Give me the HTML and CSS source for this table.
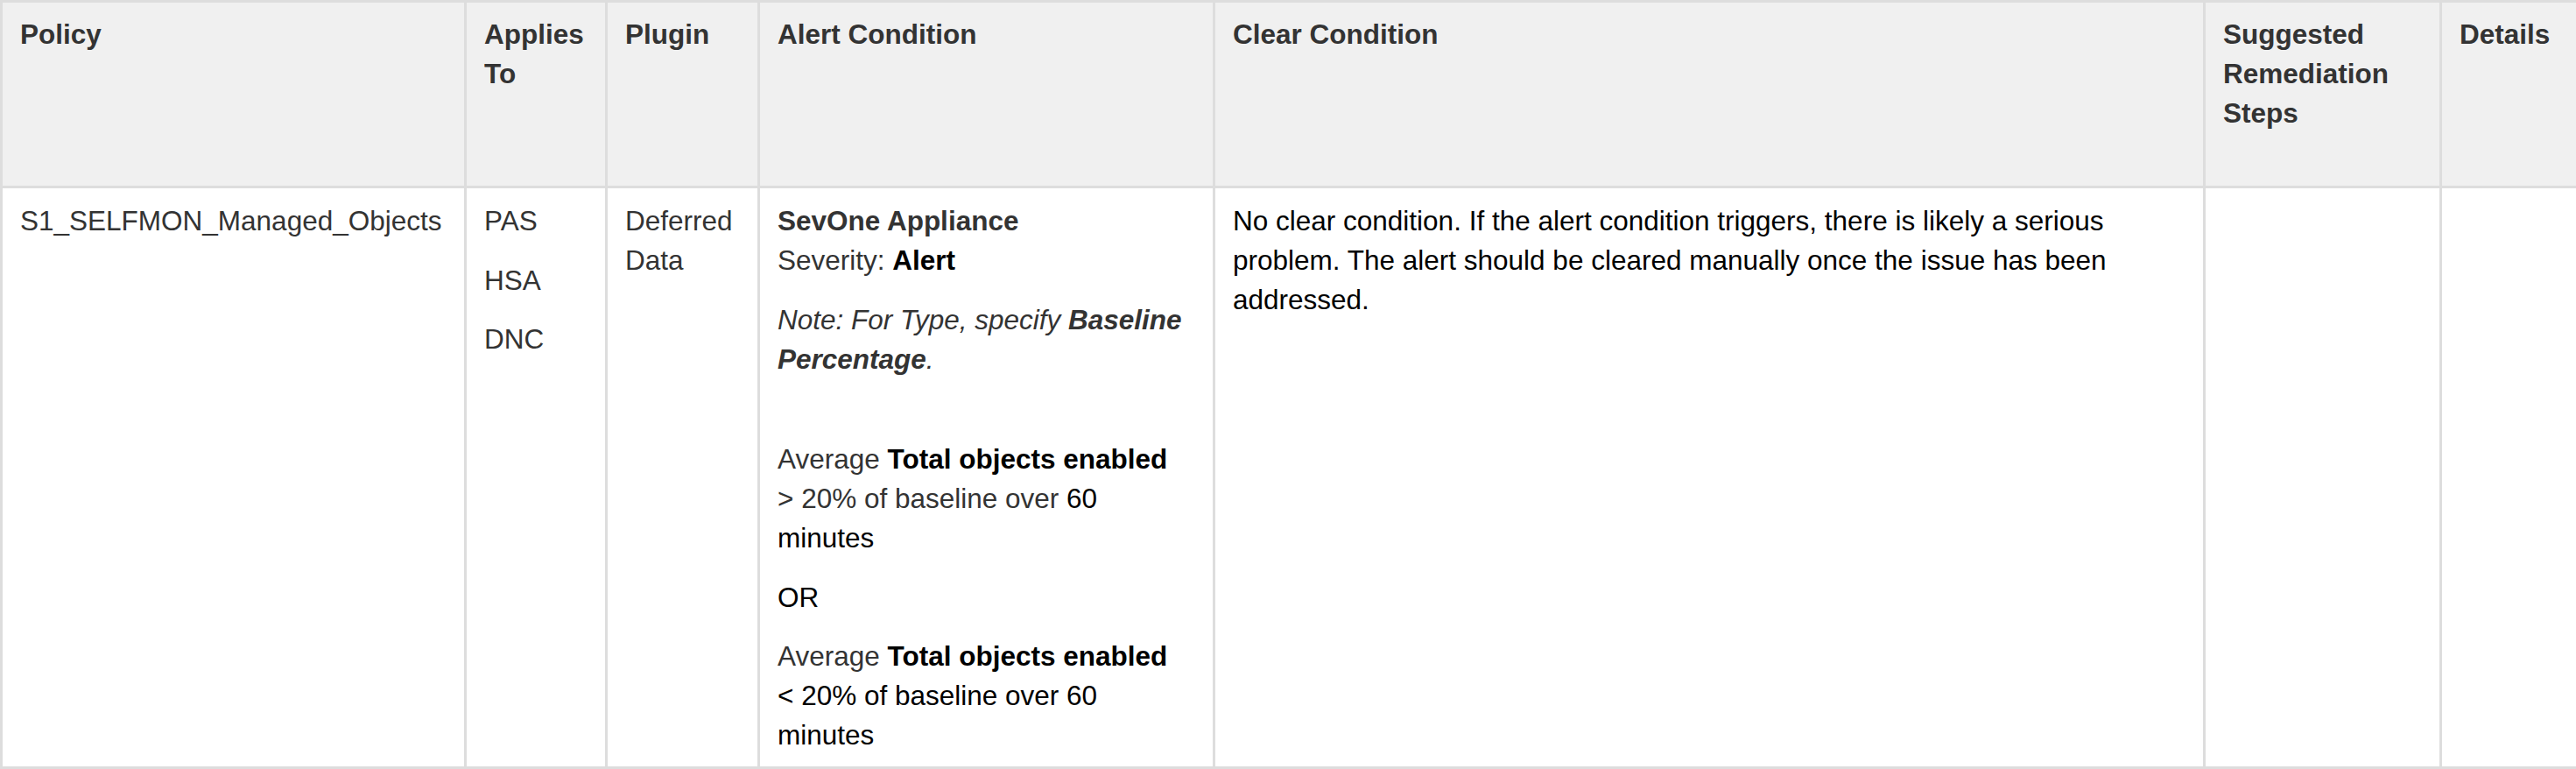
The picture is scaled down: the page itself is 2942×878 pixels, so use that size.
FILE: index.html
```html
<!DOCTYPE html>
<html lang="en">
<head>
<meta charset="utf-8">
<title>Policy table</title>
<link rel="stylesheet" href="styles.css">
</head>
<body>
<table class="policy-table">
  <colgroup>
    <col class="c-policy">
    <col class="c-applies">
    <col class="c-plugin">
    <col class="c-alert">
    <col class="c-clear">
    <col class="c-steps">
    <col class="c-details">
  </colgroup>
  <thead>
    <tr>
      <th>Policy</th>
      <th>Applies To</th>
      <th>Plugin</th>
      <th>Alert Condition</th>
      <th>Clear Condition</th>
      <th>Suggested Remediation Steps</th>
      <th>Details</th>
    </tr>
  </thead>
  <tbody>
    <tr>
      <td><p>S1_SELFMON_Managed_Objects</p></td>
      <td>
        <p>PAS</p>
        <p>HSA</p>
        <p>DNC</p>
      </td>
      <td><p>Deferred Data</p></td>
      <td>
        <p><b>SevOne Appliance</b><br>Severity: <b class="dark">Alert</b></p>
        <p><i>Note: For Type, specify <b>Baseline Percentage</b>.</i></p>
        <p class="spacer">&nbsp;</p>
        <p>Average <b class="dark">Total objects enabled</b><br>&gt; 20% of baseline over <span class="dark">60 minutes</span></p>
        <p class="dark">OR</p>
        <p>Average <b class="dark">Total objects enabled</b><br><span class="dark">&lt; 20% of baseline over 60 minutes</span></p>
      </td>
      <td><p class="dark">No clear condition. If the alert condition triggers, there is likely a serious problem. The alert should be cleared manually once the issue has been addressed.</p></td>
      <td></td>
      <td></td>
    </tr>
  </tbody>
</table>
</body>
</html>
```

FILE: styles.css
```css
html, body {
  margin: 0;
  padding: 0;
  background: #ffffff;
}

body {
  font-family: "Liberation Sans", Arial, sans-serif;
  font-size: 31.5px;
  line-height: 45px;
  color: #333333;
}

.policy-table {
  width: 2942px;
  table-layout: fixed;
  border-collapse: collapse;
  border: 3px solid #dddddd;
}

.c-policy { width: 530px; }
.c-applies { width: 161px; }
.c-plugin { width: 174px; }
.c-alert { width: 520px; }
.c-clear { width: 1131px; }
.c-steps { width: 270px; }
.c-details { width: 156px; }

.policy-table th,
.policy-table td {
  border: 3px solid #dddddd;
  vertical-align: top;
  text-align: left;
}

.policy-table th {
  background: #f0f0f0;
  font-weight: bold;
  color: #333333;
  padding: 14px 20px 60px 20px;
}

.policy-table td {
  padding: 15px 20px 13px 20px;
}

.policy-table p {
  margin: 0 0 22.5px 0;
}

.policy-table p:last-child {
  margin-bottom: 0;
}

.policy-table p.spacer {
  margin-bottom: 2px;
}

.dark {
  color: #000000;
}
```
